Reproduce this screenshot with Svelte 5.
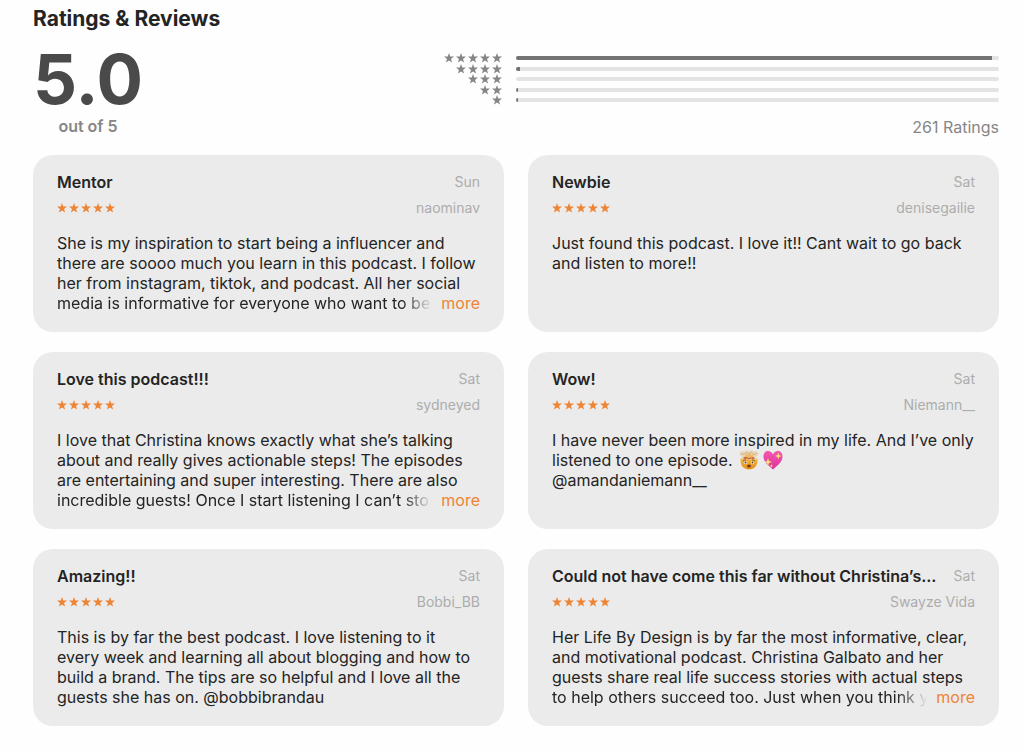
<script lang="ts">
  type Review = {
    title: string
    date: string
    author: string
    body: string
    emoji?: boolean
    tail?: string
    clipped?: string
  }

  const histogram = [
    { stars: 5, share: 98.6 },
    { stars: 4, share: 0.8 },
    { stars: 3, share: 0 },
    { stars: 2, share: 0.4 },
    { stars: 1, share: 0.4 }
  ]

  // clipped holds the last visible line, which fades out before the "more" button
  const reviews: Review[] = [
    {
      title: 'Mentor',
      date: 'Sun',
      author: 'naominav',
      body: 'She is my inspiration to start being a influencer and\nthere are soooo much you learn in this podcast. I follow\nher from instagram, tiktok, and podcast. All her social',
      clipped: 'media is informative for everyone who want to be'
    },
    {
      title: 'Newbie',
      date: 'Sat',
      author: 'denisegailie',
      body: 'Just found this podcast. I love it!! Cant wait to go back\nand listen to more!!'
    },
    {
      title: 'Love this podcast!!!',
      date: 'Sat',
      author: 'sydneyed',
      body: 'I love that Christina knows exactly what she’s talking\nabout and really gives actionable steps! The episodes\nare entertaining and super interesting. There are also',
      clipped: 'incredible guests! Once I start listening I can’t sto'
    },
    {
      title: 'Wow!',
      date: 'Sat',
      author: 'Niemann__',
      body: 'I have never been more inspired in my life. And I’ve only\nlistened to one episode. ',
      emoji: true,
      tail: '\n@amandaniemann__'
    },
    {
      title: 'Amazing!!',
      date: 'Sat',
      author: 'Bobbi_BB',
      body: 'This is by far the best podcast. I love listening to it\nevery week and learning all about blogging and how to\nbuild a brand. The tips are so helpful and I love all the\nguests she has on. @bobbibrandau'
    },
    {
      title: 'Could not have come this far without Christina’s...',
      date: 'Sat',
      author: 'Swayze Vida',
      body: 'Her Life By Design is by far the most informative, clear,\nand motivational podcast. Christina Galbato and her\nguests share real life success stories with actual steps',
      clipped: 'to help others succeed too. Just when you think y'
    }
  ]
</script>

{#snippet stars(count: number)}
  <span class="stars" role="img" aria-label="{count} stars">
    {#each Array(count) as _}
      <svg aria-hidden="true" viewBox="0 0 20 20">
        <path d="M10 0 12.5 7 20 7.2 14 11.8 16.2 19 10 14.8 3.8 19 6 11.8 0 7.2 7.5 7Z" fill="currentColor" />
      </svg>
    {/each}
  </span>
{/snippet}

<main>
  <h1>Ratings &amp; Reviews</h1>

  <section class="summary">
    <div class="score">
      <strong>5.0</strong>
      <span>out of 5</span>
    </div>
    <div class="breakdown">
      <div class="histogram">
        {#each histogram as row}
          <div class="row">
            {@render stars(row.stars)}
            <div class="track"><div class="fill" style="width: {row.share}%"></div></div>
          </div>
        {/each}
      </div>
      <p class="total">261 Ratings</p>
    </div>
  </section>

  <section class="reviews">
    {#each reviews as review}
      <article>
        <header>
          <h2>{review.title}</h2>
          <time>{review.date}</time>
        </header>
        <div class="byline">
          {@render stars(5)}
          <span class="author">{review.author}</span>
        </div>
        <div class="body">
          <p>{review.body}{#if review.emoji}<svg class="emoji" role="img" aria-label="Exploding head" viewBox="0 0 40 40">
                <defs>
                  <linearGradient id="face" x2="0" y2="1">
                    <stop offset="0" stop-color="#f0b637" />
                    <stop offset="1" stop-color="#e98f24" />
                  </linearGradient>
                </defs>
                <path d="M3 17C2 31 9 39 20 39s18-8 17-22Z" fill="url(#face)" />
                <path d="M5 19 7 14 2 11 1 6l5-4 5 1 3-3 6 2 6-2 3 3 6-1 4 4-1 5-5 3 2 5-5 1-4-2-5 2-5-2-5 2-4-2Z" fill="#e8d6b8" />
                <path d="m8 16 5-3 7 2 6-2 6 3-3 3-4-2-5 2-4-2-5 2Z" fill="#c8683c" />
                <path d="m12 13 2-7 4 5 3-7 3 7 5-4-1 7-8 2Z" fill="#efb862" />
                <path d="m4 7 6 2 3-4 7 2 6-2 4 4 6-2" fill="none" stroke="#c4ab86" stroke-width="1.4" />
                <circle cx="13" cy="25" r="3.2" fill="#fff" />
                <circle cx="27" cy="25" r="3.2" fill="#fff" />
                <circle cx="13" cy="25" r="1.9" fill="#55321c" />
                <circle cx="27" cy="25" r="1.9" fill="#55321c" />
                <path d="m8 21 6-1m12 0 6 1" stroke="#784718" stroke-width="1.5" />
                <ellipse cx="20" cy="32" rx="4" ry="3" fill="#70391c" />
              </svg><svg class="emoji" role="img" aria-label="Sparkling heart" viewBox="0 0 40 40">
                <defs>
                  <linearGradient id="heart" x2="0" y2="1">
                    <stop offset="0" stop-color="#f557ae" />
                    <stop offset="1" stop-color="#d8349e" />
                  </linearGradient>
                </defs>
                <path d="M20 39C13 32 1 25 1 13 1 6 5 2 10 2c5 0 8 3 10 7 2-4 5-7 10-7 5 0 9 4 9 11 0 12-12 19-19 26Z" fill="url(#heart)" />
                <path d="m10 16 2 6 6 2-6 2-2 6-2-6-6-2 6-2Z" fill="#fde177" />
                <path d="m31 5 1 5 5 2-5 2-1 5-2-5-5-2 5-2Z" fill="#fde177" />
                <path d="m17 28 1 3 3 1-3 1-1 3-1-3-3-1 3-1Z" fill="#f9d85e" />
              </svg>{/if}{review.tail ?? ''}</p>
          {#if review.clipped}
            <div class="last-line">
              <span>{review.clipped}</span>
              <button type="button">more</button>
            </div>
          {/if}
        </div>
      </article>
    {/each}
  </section>
</main>

<style>
  :global(body) {
    margin: 0;
    background: #fefefe;
  }

  main {
    padding: 7px 25px 24px 33px;
    font-family: Inter, "Noto Sans", sans-serif;
    font-size: 16px;
    line-height: 20px;
    color: #242424;
  }

  h1,
  h2,
  p {
    margin: 0;
  }

  h1 {
    font-size: 21px;
    font-weight: 700;
    line-height: 24px;
  }

  .summary {
    display: flex;
    justify-content: space-between;
    margin-bottom: 18px;
  }

  .score {
    display: flex;
    flex-direction: column;
    align-items: center;
    padding-top: 11px;
    font-weight: 600;
    color: #868686;
  }

  .score strong {
    font-size: 69px;
    font-weight: 700;
    line-height: 74px;
    color: #4a4a4a;
  }

  .breakdown {
    width: 60%;
    padding-top: 22px;
    color: #868686;
  }

  .histogram {
    display: flex;
    flex-direction: column;
    justify-content: space-between;
    height: 52px;
  }

  .row {
    display: grid;
    grid-template-columns: 83px 1fr;
    align-items: center;
    gap: 14px;
    height: 10px;
  }

  .row .stars {
    justify-content: flex-end;
  }

  .stars {
    display: flex;
    gap: 2px;
  }

  .stars svg {
    width: 10px;
    height: 10px;
  }

  .track {
    height: 4px;
    border-radius: 2px;
    background: #e4e4e5;
    overflow: hidden;
  }

  .fill {
    height: 100%;
    background: #737373;
  }

  .total {
    margin-top: 12px;
    text-align: right;
  }

  .reviews {
    display: grid;
    grid-template-columns: repeat(2, minmax(0, 1fr));
    gap: 20px 24px;
  }

  article {
    padding: 16px 24px 19px;
    border-radius: 20px;
    background: #ebebeb;
  }

  header,
  .byline {
    display: flex;
    align-items: center;
    justify-content: space-between;
    gap: 16px;
  }

  header {
    margin-bottom: 5px;
    line-height: 22px;
  }

  h2 {
    font-size: 16px;
    font-weight: 600;
    white-space: nowrap;
  }

  time,
  .author {
    font-size: 14px;
    color: #adadad;
  }

  .byline {
    margin-bottom: 15px;
  }

  .byline .stars {
    color: #ee8434;
  }

  .body {
    min-height: 80px;
  }

  .body p {
    white-space: pre-line;
  }

  .emoji {
    width: 20px;
    height: 20px;
    margin: 0 2px;
    vertical-align: top;
  }

  .last-line {
    display: flex;
    gap: 9px;
  }

  .last-line span {
    flex: 1;
    min-width: 0;
    overflow: hidden;
    white-space: nowrap;
    mask-image: linear-gradient(to left, transparent, #000 30px);
  }

  button {
    padding: 0;
    border: 0;
    background: none;
    font: inherit;
    color: #ee8434;
    cursor: pointer;
  }
</style>
